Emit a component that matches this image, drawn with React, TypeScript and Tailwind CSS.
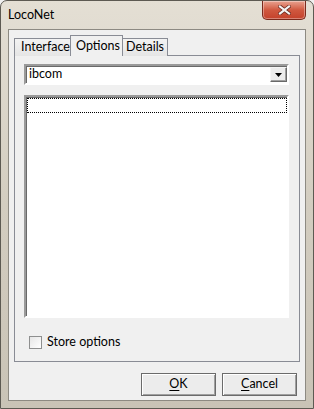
import React from 'react'

const font = { fontFamily: 'Lato, "Open Sans", sans-serif' }

function CloseButton() {
  return (
    <div className="w-[44px] h-[19px] rounded-b-[5px] border border-t-0 border-[#7a2a1c] bg-gradient-to-b from-[#e8a290] via-[#d0583f] to-[#c4412b] flex items-center justify-center shadow-[inset_0_0_0_1px_rgba(255,255,255,0.35)]">
      <svg width="13" height="10" viewBox="0 0 13 10">
        <path d="M2 1.5 L11 8.5 M11 1.5 L2 8.5" stroke="#6a2a1f" strokeWidth="3.6" strokeLinecap="square" />
        <path d="M2 1.5 L11 8.5 M11 1.5 L2 8.5" stroke="#f4f4f4" strokeWidth="2.2" strokeLinecap="square" />
      </svg>
    </div>
  )
}

function Button({ label, hot }: { label: string; hot: string }) {
  const rest = label.slice(1)
  return (
    <div className="w-[75px] h-[23px] border border-[#6b6b6b] bg-[#ececec] shadow-[inset_1px_1px_0_#ffffff,inset_-1px_-1px_0_#a0a0a0] flex items-center justify-center text-[12.5px] text-black">
      <span>
        <span className="underline underline-offset-2">{hot}</span>
        {rest}
      </span>
    </div>
  )
}

export default function App() {
  return (
    <div className="w-[314px] h-[409px] bg-[#f0f0f0]" style={font}>
      <div className="w-[314px] h-[409px] rounded-t-[7px] border border-[#5d5a52] bg-gradient-to-b from-[#e4dfd4] via-[#d3cdc0] to-[#c9c3b6] flex flex-col">
        {/* Title bar */}
        <div className="h-[28px] flex items-start justify-between pl-[7px] pr-[7px]">
          <span className="mt-[5px] text-[12.5px] text-black">LocoNet</span>
          <CloseButton />
        </div>

        {/* Client */}
        <div className="mx-[7px] mb-[7px] flex-1 border border-[#8d8a82] bg-[#f0f0f0] px-[5px] pt-[5px] flex flex-col">
          {/* Tabs */}
          <div className="h-[21px] flex items-end text-[12.5px] text-black relative z-10 -mb-px whitespace-nowrap">
            <div className="h-[18px] w-[57px] border border-b-0 border-[#898c95] bg-gradient-to-b from-[#f3f3f3] to-[#e5e5e5] flex items-center pl-[6px]">
              Interface
            </div>
            <div className="h-[21px] w-[53px] -ml-px border border-b-0 border-[#898c95] bg-[#f0f0f0] flex items-start pt-[1px] pl-[5px]">
              Options
            </div>
            <div className="h-[18px] w-[45px] border border-b-0 border-l-0 border-[#898c95] bg-gradient-to-b from-[#f3f3f3] to-[#e5e5e5] flex items-center pl-[3px]">
              Details
            </div>
          </div>

          {/* Panel */}
          <div className="h-[307px] border border-[#898c95] bg-[#f0f0f0] pt-[8px] pl-[9px] pr-[10px] flex flex-col">
            {/* Combo */}
            <div className="h-[21px] border-2 border-t-[#9a9a9a] border-l-[#9a9a9a] border-b-[#ffffff] border-r-[#ffffff] shadow-[inset_1px_1px_0_#696969] bg-white flex items-stretch">
              <div className="flex-1 flex items-center pl-[3px] text-[12.5px] text-black">ibcom</div>
              <div className="w-[17px] my-[1px] bg-[#ececec] border border-t-[#f5f5f5] border-l-[#f5f5f5] border-b-[#696969] border-r-[#696969] shadow-[inset_-1px_-1px_0_#a0a0a0] flex items-center justify-center">
                <svg width="7" height="4" viewBox="0 0 7 4">
                  <path d="M0 0 H7 L3.5 4 Z" fill="#000" />
                </svg>
              </div>
            </div>

            {/* List */}
            <div className="mt-[10px] h-[223px] border-2 border-t-[#9a9a9a] border-l-[#9a9a9a] border-b-[#ffffff] border-r-[#ffffff] shadow-[inset_1px_1px_0_#696969] bg-white pt-[1px] pl-[1px]">
              <div className="h-[15px] border border-dotted border-black" />
            </div>

            {/* Checkbox */}
            <div className="mt-[15px] ml-[5px] flex items-center gap-[5px] text-[12.5px] text-black">
              <div className="w-[13px] h-[13px] border border-[#8e8f8f] bg-gradient-to-br from-[#e6e6e6] to-[#ffffff]" />
              <span>Store options</span>
            </div>
          </div>

          {/* Buttons */}
          <div className="mt-[11px] flex justify-end gap-[6px] pr-[3px]">
            <Button label="OK" hot="O" />
            <Button label="Cancel" hot="C" />
          </div>
        </div>
      </div>
    </div>
  )
}
